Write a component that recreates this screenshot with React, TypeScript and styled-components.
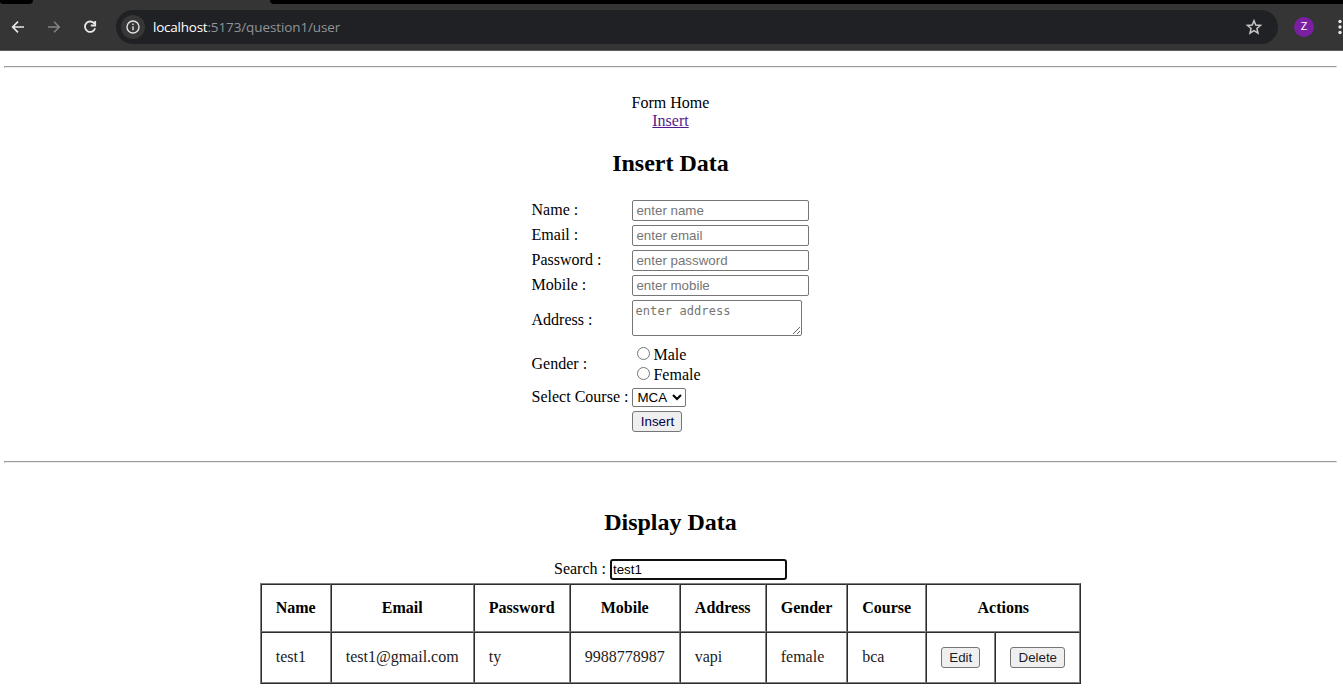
import React, { useState } from 'react';
import styled, { createGlobalStyle } from 'styled-components';

const GlobalStyle = createGlobalStyle`
  *, *::before, *::after { box-sizing: border-box; }
  html, body { margin: 0; padding: 0; background: #fff; overflow: hidden; }
  body { font: 16px/18px "Liberation Serif", "Times New Roman", serif; color: #000; }
`;

const Window = styled.div`
  display: flex;
  flex-direction: column;
  height: 690px;
  overflow: hidden;
`;

const TabStrip = styled.div`
  display: flex;
  justify-content: space-between;
  height: 4px;
  background: #353535;
`;

const StripGap = styled.div<{ $side: 'left' | 'right' }>`
  width: ${p => (p.$side === 'left' ? '33px' : '1073px')};
  background: #000;
  border-radius: ${p => (p.$side === 'left' ? '0 0 5px 3px' : '0 0 0 5px')};
`;

const Toolbar = styled.div`
  display: flex;
  align-items: center;
  height: 47px;
  padding: 0 0 1px 8px;
  background: #353535;
  border-bottom: 1px solid #5c5c5c;
  flex: none;
`;

const NavButton = styled.span<{ $dim?: boolean }>`
  display: flex;
  width: 20px;
  height: 20px;
  margin-right: 16px;
  align-items: center;
  justify-content: center;
  color: ${p => (p.$dim ? '#858585' : '#e8e8e8')};
`;

const AddressBar = styled.div`
  display: flex;
  align-items: center;
  width: 1162px;
  height: 34px;
  padding: 0 15px 0 5px;
  border-radius: 17px;
  background: #202124;
`;

const SiteInfo = styled.span`
  display: flex;
  align-items: center;
  justify-content: center;
  width: 24px;
  height: 24px;
  border-radius: 50%;
  background: #373737;
  color: #e3e3e3;
`;

const Url = styled.span`
  flex: 1;
  margin-left: 8px;
  font: 13.5px/20px "Open Sans", "Noto Sans", sans-serif;
  letter-spacing: -0.11px;
  color: #919499;
  b { font-weight: 400; letter-spacing: -0.24px; color: #fff; }
`;

const Avatar = styled.span`
  display: flex;
  align-items: center;
  justify-content: center;
  width: 20px;
  height: 20px;
  margin-left: 16px;
  border-radius: 50%;
  background: #7b1fa2;
  color: #fff;
  font: 11px/20px Roboto, sans-serif;
`;

const Menu = styled.span`
  display: flex;
  margin-left: 22px;
`;

const Page = styled.main`
  display: flex;
  flex-direction: column;
  align-items: center;
  padding: 15px 6px 0 4px;
`;

const Rule = styled.hr`
  width: 100%;
  height: 2px;
  margin: 0;
  border: 1px solid;
  border-color: #9a9a9a #eee #eee #9a9a9a;
  flex: none;
`;

const Nav = styled.nav`
  margin-top: 26px;
  text-align: center;
`;

const Link = styled.a`
  color: #551a8b;
  text-decoration: underline;
`;

const Heading = styled.h2<{ $top: number; $bottom: number }>`
  margin: ${p => p.$top}px 0 ${p => p.$bottom}px;
  font-size: 24px;
  line-height: 27px;
  font-weight: 700;
`;

const FormTable = styled.table`
  border-spacing: 2px;
  margin-bottom: 26px;
  td { padding: 1px; vertical-align: middle; }
`;

const FormRow = styled.tr<{ $h: number; $raised?: boolean }>`
  height: ${p => p.$h}px;
  td:first-child { padding-top: ${p => (p.$raised ? 0 : 1)}px; }
`;

const controlFont = '13.333px "Liberation Sans", Arial, sans-serif';

const Input = styled.input`
  display: block;
  width: 177px;
  height: 21px;
  padding: 1px 3px;
  border: 1px solid #767676;
  border-radius: 2px;
  font: ${controlFont};
  outline: none;
  &::placeholder { color: #757575; }
`;

const SearchInput = styled(Input)`
  padding: 1px 2px 1px 1px;
  border: 2px solid #101010;
  border-radius: 3px;
`;

const TextArea = styled.textarea`
  display: block;
  width: 170px;
  height: 36px;
  margin-bottom: 4px;
  padding: 2px;
  border: 1px solid #767676;
  border-radius: 2px;
  font: 12px/16px "DejaVu Sans Mono", monospace;
  letter-spacing: 0.1px;
  overflow: hidden;
  &::placeholder { color: #757575; }
`;

const Choices = styled.div`
  height: 40px;
  padding-top: 1px;
`;

const Choice = styled.label`
  display: flex;
  align-items: flex-start;
  height: 20px;
  line-height: 20px;
  input { width: 13px; height: 13px; margin: 2px 3px 0 5px; }
`;

const Select = styled.select`
  display: block;
  width: 54px;
  height: 19px;
  padding: 0;
  border: 1px solid #767676;
  border-radius: 2px;
  background: #fff;
  color: #000;
  font: ${controlFont};
`;

const Button = styled.button<{ $w: number; $ink?: string }>`
  display: block;
  width: ${p => p.$w}px;
  height: 21px;
  padding: 0;
  border: 1px solid #767676;
  border-radius: 3px;
  background: #efefef;
  color: ${p => p.$ink ?? '#000'};
  font: ${controlFont};
`;

const Search = styled.label`
  display: flex;
  align-items: flex-start;
  gap: 4px;
  margin-bottom: 3px;
  span { padding-top: 1px; }
`;

const DataTable = styled.table`
  border: 1px outset #808080;
  border-spacing: 0;
  th, td { padding: 14px; border: 1px inset #808080; }
  td { padding-bottom: 15px; color: #1c1c1c; }
  td:nth-last-child(-n + 2) { padding-bottom: 14px; }
`;

const HeadCell = styled.th<{ $w: number }>`
  width: ${p => p.$w}px;
`;

const textFields = ['name', 'email', 'password', 'mobile'];
const columns: [string, number][] = [
  ['Name', 70],
  ['Email', 143],
  ['Password', 96],
  ['Mobile', 110],
  ['Address', 86],
  ['Gender', 81],
  ['Course', 79],
];
const records = [['test1', 'test1@gmail.com', 'ty', '9988778987', 'vapi', 'female', 'bca']];
const capitalize = (s: string) => s[0].toUpperCase() + s.slice(1);

function BrowserBar() {
  return (
    <>
      <TabStrip>
        <StripGap $side="left" />
        <StripGap $side="right" />
      </TabStrip>
      <Toolbar>
        <NavButton>
          <svg width="14" height="14" viewBox="0 0 14 14" fill="none" stroke="currentColor" strokeWidth="1.7">
            <path d="M13 7H2M7 1.7 1.7 7 7 12.3" />
          </svg>
        </NavButton>
        <NavButton $dim>
          <svg width="14" height="14" viewBox="0 0 14 14" fill="none" stroke="currentColor" strokeWidth="1.5">
            <path d="M1 7h11M7 1.7 12.3 7 7 12.3" />
          </svg>
        </NavButton>
        <NavButton>
          <svg width="14" height="14" viewBox="0 0 14 14" fill="none" stroke="currentColor" strokeWidth="1.8">
            <path d="M11.4 3.7A5.2 5.2 0 1 0 12.1 8.3M12.2 1v4.5H7.8" />
          </svg>
        </NavButton>
        <AddressBar>
          <SiteInfo>
            <svg width="14" height="14" viewBox="0 0 14 14" fill="none" stroke="currentColor" strokeWidth="1.4">
              <circle cx="7" cy="7" r="6" />
              <path d="M7 6.2v4M7 3.6v1.5" />
            </svg>
          </SiteInfo>
          <Url><b>localhost</b>:5173/question1/user</Url>
          <svg width="18" height="18" viewBox="0 0 18 18" fill="none" stroke="#c7c7c7" strokeWidth="1.5">
            <path d="m9 2.7 1.8 4.3 4.7.4-3.6 3.1 1.1 4.6L9 12.7l-4 2.4 1.1-4.6-3.6-3.1 4.7-.4z" />
          </svg>
        </AddressBar>
        <Avatar>Z</Avatar>
        <Menu>
          <svg width="7" height="16" viewBox="0 0 7 16" fill="#e8e8e8">
            <circle cx="4" cy="2.5" r="1.7" />
            <circle cx="4" cy="8" r="1.7" />
            <circle cx="4" cy="13.5" r="1.7" />
          </svg>
        </Menu>
      </Toolbar>
    </>
  );
}

export default function App() {
  const [query, setQuery] = useState('test1');
  return (
    <Window>
      <GlobalStyle />
      <BrowserBar />
      <Page>
        <Rule />
        <Nav>
          <div>Form Home</div>
          <Link href="#">Insert</Link>
        </Nav>
        <Heading $top={20} $bottom={20}>Insert Data</Heading>
        <FormTable>
          <tbody>
            {textFields.map(f => (
              <FormRow $h={23} $raised key={f}>
                <td>{capitalize(f)} :</td>
                <td><Input placeholder={`enter ${f}`} /></td>
              </FormRow>
            ))}
            <FormRow $h={42}>
              <td>Address :</td>
              <td><TextArea placeholder="enter address" /></td>
            </FormRow>
            <FormRow $h={42}>
              <td>Gender :</td>
              <td>
                <Choices>
                  <Choice><input type="radio" name="gender" />Male</Choice>
                  <Choice><input type="radio" name="gender" />Female</Choice>
                </Choices>
              </td>
            </FormRow>
            <FormRow $h={21} $raised>
              <td>Select Course :</td>
              <td><Select><option>MCA</option></Select></td>
            </FormRow>
            <FormRow $h={23}>
              <td />
              <td><Button $w={50} $ink="#00004d">Insert</Button></td>
            </FormRow>
          </tbody>
        </FormTable>
        <Rule />
        <Heading $top={46} $bottom={23}>Display Data</Heading>
        <Search>
          <span>Search :</span>
          <SearchInput value={query} onChange={e => setQuery(e.target.value)} />
        </Search>
        <DataTable>
          <thead>
            <tr>
              {columns.map(([label, width]) => <HeadCell $w={width} key={label}>{label}</HeadCell>)}
              <th colSpan={2}>Actions</th>
            </tr>
          </thead>
          <tbody>
            {records.map(r => (
              <tr key={r[0]}>
                {r.map((v, i) => <td key={i}>{v}</td>)}
                <td><Button $w={39} $ink="#1c1c1c">Edit</Button></td>
                <td><Button $w={55} $ink="#1c1c1c">Delete</Button></td>
              </tr>
            ))}
          </tbody>
        </DataTable>
      </Page>
    </Window>
  );
}
